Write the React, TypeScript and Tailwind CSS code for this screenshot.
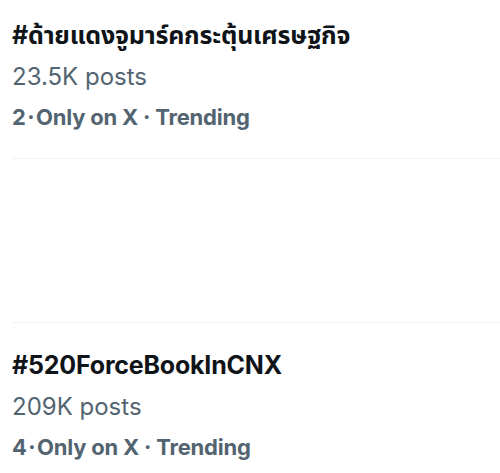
export default function App() {
  const font = { fontFamily: 'Inter, "Noto Sans", "Noto Sans Thai", sans-serif' };
  return (
    <div className="w-[500px] h-[473px] bg-white overflow-hidden" style={font}>
      <div className="ml-3 pt-[14px] pb-[21px] border-b border-[#eff3f4]">
        <div className="h-[43px] leading-[43px] text-[25px] font-bold text-[#0f1419] tracking-[-0.2px] whitespace-nowrap">#ด้ายแดงจูมาร์คกระตุ้นเศรษฐกิจ</div>
        <div className="h-[41px] leading-[40px] text-[24px] text-[#536471]">23.5K posts</div>
        <div className="h-[39px] leading-[39px] text-[22px] font-bold text-[#536471] tracking-[-0.2px]">2{"\u200A·\u200A"}Only on X · Trending</div>
      </div>
      <div className="ml-3 h-[164px] border-b border-[#eff3f4]" />
      <div className="ml-3 pt-[21px]">
        <div className="h-[43px] leading-[43px] text-[25px] font-bold text-[#0f1419] tracking-[-0.2px]">#520ForceBookInCNX</div>
        <div className="h-[41px] leading-[40px] text-[24px] text-[#536471]">209K posts</div>
        <div className="h-[39px] leading-[39px] text-[22px] font-bold text-[#536471] tracking-[-0.2px]">4{"\u200A·\u200A"}Only on X · Trending</div>
      </div>
    </div>
  );
}
